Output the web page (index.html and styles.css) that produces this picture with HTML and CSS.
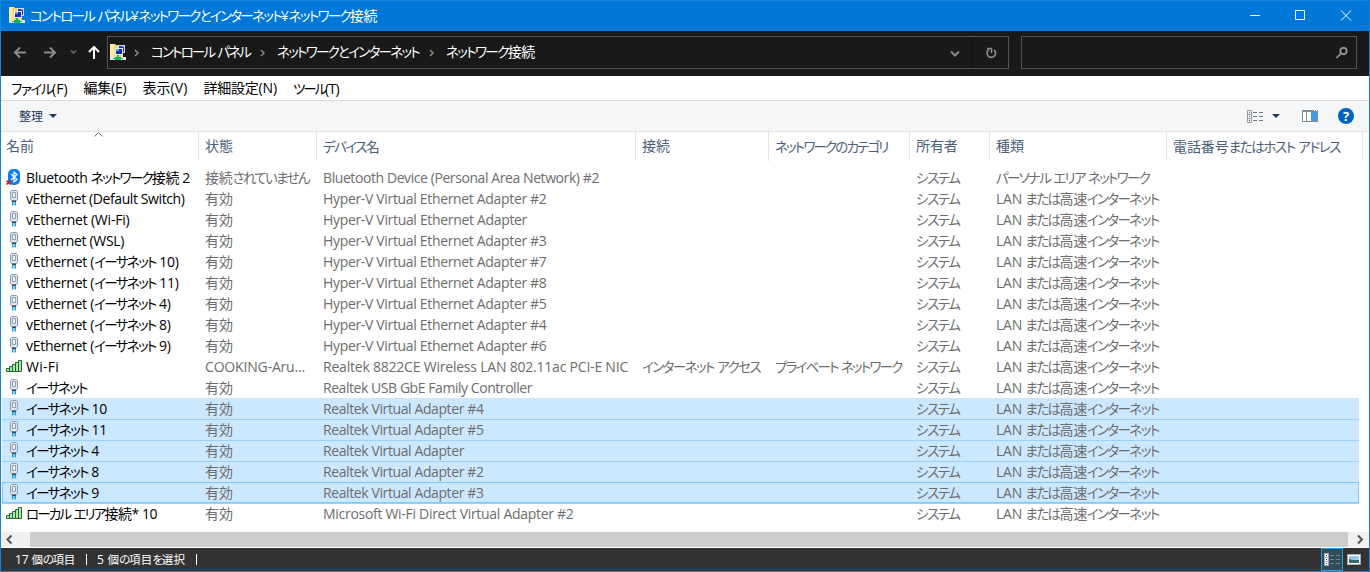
FILE: index.html
```html
<!doctype html>
<html lang="ja">
	<head>
		<meta charset="utf-8">
		<title>ネットワーク接続</title>
		<link rel="stylesheet" href="styles.css">
	</head>
	<body>
		<!-- shared icons -->
		<svg class="defs" width="0" height="0">
			<symbol id="i-net" viewBox="0 0 16 16">
				<path d="M0 0h5l1 1h7v12H0z" fill="#f0d878"/>
				<path d="M0 0h4v13H0z" fill="#fdeba0"/>
				<path d="M8 1h7v8H8z" fill="#d8dce0"/>
				<path d="M9 2h5v6H9z" fill="#1638c8"/>
				<path d="M5 4h8v7H5z" fill="#e6eaee"/>
				<path d="M6 5h6v5H6z" fill="#1230b4"/>
				<path d="M6 5h3v2H6zM12 2h2v1h-2z" fill="#6f9cf5"/>
				<path d="M0 13h16v3H0z" fill="#e4e8ea"/>
				<path d="M7 11h2v2h2v3H5v-3h2z" fill="#12b860"/>
				<path d="M3 14h10v1H3z" fill="#12b860"/>
			</symbol>
			<symbol id="i-lan" viewBox="0 0 16 16">
				<path d="M5.500 .5h5l1 1v8l-1.500 1.500H6l-1.500-1.500v-8z" fill="#dfe5ec" stroke="#8c9bb0"/>
				<path d="M6.500 2.500v5h3v-5z" fill="#f6f8fa" stroke="#8c9bb0"/>
				<path d="M6 10.500h4v1.500H6z" fill="#33475e"/>
				<path d="M6 12h1.500v3H6zM8.500 12H10v3H8.500z" fill="#1ba0cf"/>
				<path d="M6 15h1.500v1H6zM8.500 15H10v1H8.500z" fill="#8cd3ea"/>
			</symbol>
			<symbol id="i-bt" viewBox="0 0 16 16">
				<rect x="2" y="0" width="12" height="16" rx="5" fill="#0a7cf2"/>
				<path d="M5 5l6 5.500L8 13V3l3 2.500L5 11" fill="none" stroke="#fff" stroke-width="1.2"/>
				<path d="M.5 11.500l4 4M4.500 11.500l-4 4" stroke="#c4161c" stroke-width="1.500"/>
			</symbol>
			<symbol id="i-wifi" viewBox="0 0 16 16">
				<path d="M.5 10.500h3v3h-3zM3.500 8.500h3v5h-3zM6.500 6.500h3v7h-3zM9.500 4.500h3v9h-3zM12.500 2.500h3v11h-3z" fill="#a9e8b4" stroke="#25682f"/>
			</symbol>
		</svg>

		<div id="window">
			<div id="title-bar">
				<svg class="icon"><use href="#i-net"/></svg>
				<span class="title" data-w="347">コントロール パネル¥ネットワークとインターネット¥ネットワーク接続</span>
				<svg class="buttons" width="138" height="30" fill="none" stroke="#fff">
					<path d="M19 14.500h10M64.500 9.500h9v9h-9zM110 9.500l10 10M120 9.500l-10 10"/>
				</svg>
			</div>

			<div id="nav-bar">
				<svg class="arrows" width="105" height="45" fill="none" stroke="#8a8a8a" stroke-width="2">
					<path d="M25 21.500H14M19 16.500l-5 5 5 5M43 21.500h11M49 16.500l5 5-5 5"/>
					<path d="M70 19.500l2.500 2.500 2.500-2.500" stroke="#666" stroke-width="1.700"/>
					<path d="M93 28V16M88 21l5-5 5 5" stroke="#fff"/>
				</svg>
				<div class="address">
					<svg class="icon"><use href="#i-net"/></svg>
					<svg class="sep" width="6" height="8"><path d="M1 1l3 3-3 3"/></svg>
					<span class="crumb" data-w="99">コントロール パネル</span>
					<svg class="sep" width="6" height="8"><path d="M1 1l3 3-3 3"/></svg>
					<span class="crumb" data-w="142">ネットワークとインターネット</span>
					<svg class="sep" width="6" height="8"><path d="M1 1l3 3-3 3"/></svg>
					<span class="crumb" data-w="89">ネットワーク接続</span>
					<svg class="tools" width="67" height="31" fill="none" stroke="#8a8a8a" stroke-width="2">
						<path d="M10 14.500l4 4 4-4"/>
						<path d="M31.500 0v31" stroke="#111" stroke-width="1"/>
						<path d="M53 12.800a4.300 4.300 0 1 1-5-.3" stroke-width="1.700"/>
						<path d="M46 11.500h4.500v4.500" stroke-width="1.500"/>
					</svg>
				</div>
				<div class="search">
					<svg width="14" height="14" fill="none" stroke="#999" stroke-width="1.700"><circle cx="8.500" cy="5" r="3.200"/><path d="M6 7.500l-4.500 4.500"/></svg>
				</div>
			</div>

			<div id="menu">
				<span data-w="56.5">ファイル(F)</span>
				<span data-w="43">編集(E)</span>
				<span data-w="45">表示(V)</span>
				<span data-w="73.5">詳細設定(N)</span>
				<span data-w="46">ツール(T)</span>
			</div>

			<div id="tool-bar">
				<span class="organize">整理</span>
				<svg class="caret" width="8" height="4"><path d="M0 0h8L4 4z"/></svg>
				<svg class="view" width="17" height="13" fill="none">
					<path d="M.5 .5h4v12h-4zM.5 4.500h4M.5 8.500h4" stroke="#9a9a9a"/>
					<path d="M6 2.500h4M12 2.500h4M6 6.500h4M12 6.500h4M6 10.500h4M12 10.500h4" stroke="#777"/>
					<path d="M2 2h1v1H2z" fill="#3a6ea5"/><path d="M2 6h1v1H2z" fill="#3a6ea5"/><path d="M2 10h1v1H2z" fill="#b03030"/>
				</svg>
				<svg class="caret" width="8" height="4"><path d="M0 0h8L4 4z"/></svg>
				<svg class="pane" width="16" height="12">
					<path d="M0 0h16v12H0z" fill="#858c94"/><path d="M1 2h3v9H1zM5 2h4v9H5z" fill="#fff"/><path d="M9 2h6v9H9z" fill="#3f9be8"/><path d="M12 .5h1M14 .5h1" stroke="#fff"/>
				</svg>
				<span class="help">?</span>
			</div>

			<div id="list">
				<div class="row head">
					<span>名前<svg class="sort" width="9" height="5"><path d="M.5 4.500l4-4 4 4" fill="none" stroke="#666"/></svg></span>
					<span>状態</span>
					<span data-w="56.5">デバイス名</span>
					<span>接続</span>
					<span data-w="112.5">ネットワークのカテゴリ</span>
					<span>所有者</span>
					<span>種類</span>
					<span data-w="167">電話番号またはホスト アドレス</span>
				</div>
				<div id="rows"></div>
			</div>

			<div id="scroll-bar">
				<svg width="29" height="15"><path d="M10.500 3.500l-4 4 4 4"/></svg>
				<div class="thumb"></div>
				<svg width="21" height="15"><path d="M10 3.500l4 4-4 4"/></svg>
			</div>

			<div id="status-bar">
				<span data-w="60">17 個の項目</span>
				<i></i>
				<span data-w="88">5 個の項目を選択</span>
				<i></i>
				<div class="mode active">
					<svg width="17" height="13" fill="none">
						<path d="M.5 .5h4v12h-4z" fill="#fff" stroke="#aaa"/><path d="M0 4.500h5M0 8.500h5" stroke="#aaa"/>
						<path d="M6 2.500h4M12 2.500h4M6 6.500h4M12 6.500h4M6 10.500h4M12 10.500h4" stroke="#75838b"/>
						<path d="M2 2h1v1H2zM2 6h1v1H2zM2 10h1v1H2z" fill="#333"/>
					</svg>
				</div>
				<div class="mode">
					<svg width="14" height="11"><path d="M0 0h14v11H0z" fill="#aaa"/><path d="M1 1h12v9H1z" fill="#fff"/><path d="M2 2h10v7H2z" fill="#9cc9ef"/><path d="M2 5l4 1h6v3H2z" fill="#35656f"/></svg>
				</div>
			</div>
		</div>

		<script src="main.js"></script>
	</body>
</html>
```
FILE: styles.css
```css
html,
body,
div {
	margin: 0;
	padding: 0;
}
body {
	overflow: hidden;
	font: 14px/21px "Open Sans", "Noto Sans CJK JP", sans-serif;
	color: #000;
}
.defs {
	position: absolute;
}
/* --fit is set by main.js */
[data-w] {
	letter-spacing: var(--fit, 0px);
}
.kana {
	font-family: "Noto Sans CJK JP", sans-serif;
	font-feature-settings: "palt";
	font-size: 13.5px;
	letter-spacing: calc(-1.4px + var(--fit, 0px));
}
.kanji {
	letter-spacing: calc(-.1px + var(--fit, 0px));
}
.icon {
	width: 16px;
	height: 16px;
	flex: none;
}
#window {
	display: flex;
	flex-direction: column;
	box-sizing: border-box;
	width: 1370px;
	height: 572px;
	border: 1px solid #1883d7;
	background: #fff;
	white-space: nowrap;
}

/* title */
#title-bar {
	display: flex;
	align-items: center;
	height: 30px;
	padding-left: 8px;
	color: #fff;
	background: #0078d7;
}
#title-bar .title {
	margin: -2px 0 0 5px;
}
#title-bar .icon {
	margin-top: -2px;
}
#title-bar .buttons {
	margin-left: auto;
}

/* address */
#nav-bar {
	display: flex;
	align-items: flex-start;
	height: 45px;
	background: #191919;
	color: #fff;
}
#nav-bar .address,
#nav-bar .search {
	display: flex;
	align-items: center;
	box-sizing: border-box;
	height: 33px;
	margin-top: 5px;
	border: 1px solid #535353;
}
#nav-bar .address {
	width: 902px;
	margin-left: 1px;
	padding-left: 2px;
}
#nav-bar .icon {
	margin-top: -1px;
}
#nav-bar .crumb {
	margin-top: -2px;
}
#nav-bar .sep {
	margin: 0 11px 0 8px;
	fill: none;
	stroke: #888;
	stroke-width: 1.5;
}
#nav-bar .crumb + .sep {
	margin-left: 10px;
}
#nav-bar .tools {
	margin-left: auto;
}
#nav-bar .search {
	width: 336px;
	margin-left: 12px;
	justify-content: flex-end;
	padding-right: 7px;
}

/* menu */
#menu {
	display: flex;
	gap: 16px;
	height: 24px;
	line-height: 24px;
	padding-left: 10px;
	border-bottom: 1px solid #dadada;
}
#tool-bar {
	display: flex;
	align-items: center;
	height: 30px;
	padding: 0 15px 0 18px;
	border-bottom: 1px solid #e5e5e5;
	background: #f4f6f8;
	color: #1e395b;
}
#tool-bar .organize .kanji {
	font-size: 12px;
}
#tool-bar .caret {
	fill: #1e395b;
	margin-left: 6px;
}
#tool-bar .view {
	margin-left: auto;
}
#tool-bar .view + .caret {
	margin-left: 8px;
}
#tool-bar .pane {
	margin: 0 20px 0 22px;
}
#tool-bar .help {
	width: 16px;
	height: 16px;
	border-radius: 50%;
	background: #0063c0;
	color: #fff;
	font-weight: bold;
	font-size: 13px;
	line-height: 16px;
	text-align: center;
}

/* list */
#list {
	flex: 1;
	color: #6d6d6d;
}
.row {
	display: grid;
	grid-template-columns: 198px 118px 319px 133px 141px 80px 177px 196px;
	height: 21px;
}
.row > span {
	padding-left: 6px;
}
.head {
	height: 29px;
	margin-bottom: 6px;
	line-height: 28px;
	color: #4c607a;
}
.head > span {
	border-right: 1px solid #e5e5e5;
}
.head > span:first-child {
	position: relative;
	padding-left: 5px;
}
.head .sort {
	position: absolute;
	left: 93px;
	top: 0;
}
#rows .row {
	box-sizing: border-box;
	width: 1357px;
	margin-left: 1px;
	grid-template-columns: 197px 118px 319px 133px 141px 80px 177px;
}
#rows .row > span:first-child {
	display: flex;
	padding-left: 4px;
	color: #000;
}
#rows .row > span:first-child > span {
	white-space: pre;
}
#rows .row .icon {
	margin: 2px 4px 0 0;
}
.row.on {
	background: #cce8ff;
}
.row.on + .row.on {
	box-shadow: inset 0 1px #99d1ff;
}
#rows .row.focus {
	box-shadow: inset 0 0 0 1px #85c6fb, 0 1px #99d1ff;
}

/* bottom */
#scroll-bar {
	display: flex;
	height: 15px;
	margin-bottom: 1px;
	background: #f0f0f0;
}
#scroll-bar .thumb {
	flex: 1;
	background: #cdcdcd;
}
#scroll-bar svg {
	fill: none;
	stroke: #505050;
	stroke-width: 2;
}
#status-bar {
	display: flex;
	align-items: center;
	height: 23px;
	padding: 0 4px 0 14px;
	background: #333;
	color: #fff;
	font-size: 12px;
}
#status-bar .kanji,
#status-bar .kana {
	font-size: 11.5px;
}
#status-bar i {
	width: 1px;
	height: 11px;
	margin: 0 10px 0 11px;
	background: #fff;
}
#status-bar .mode {
	display: flex;
	align-items: center;
	justify-content: center;
	box-sizing: border-box;
	width: 22px;
	height: 23px;
}
#status-bar .active {
	margin-left: auto;
	border: 1px solid #26a0da;
	background: #2f4c5a;
}
```
FILE: main.js
```js
var LAN = "LAN または高速インターネット";
//アイコン, 名前, 状態, デバイス名, 接続, カテゴリ, 種類, class
var aRows = [
	["bt", "Bluetooth ネットワーク接続 2|164", "接続されていません|104", "Bluetooth Device (Personal Area Network) #2|276", "", "", "パーソナル エリア ネットワーク|153"],
	["lan", "vEthernet (Default Switch)|158.5", "有効", "Hyper-V Virtual Ethernet Adapter #2|223.5", "", "", LAN],
	["lan", "vEthernet (Wi-Fi)|103.5", "有効", "Hyper-V Virtual Ethernet Adapter|204", "", "", LAN],
	["lan", "vEthernet (WSL)|98", "有効", "Hyper-V Virtual Ethernet Adapter #3|223.5", "", "", LAN],
	["lan", "vEthernet (イーサネット 10)|152.5", "有効", "Hyper-V Virtual Ethernet Adapter #7|223.5", "", "", LAN],
	["lan", "vEthernet (イーサネット 11)|152.5", "有効", "Hyper-V Virtual Ethernet Adapter #8|223.5", "", "", LAN],
	["lan", "vEthernet (イーサネット 4)|144.5", "有効", "Hyper-V Virtual Ethernet Adapter #5|223.5", "", "", LAN],
	["lan", "vEthernet (イーサネット 8)|144.5", "有効", "Hyper-V Virtual Ethernet Adapter #4|223.5", "", "", LAN],
	["lan", "vEthernet (イーサネット 9)|144.5", "有効", "Hyper-V Virtual Ethernet Adapter #6|223.5", "", "", LAN],
	["wifi", "Wi-Fi|33", "COOKING-Aru...|100", "Realtek 8822CE Wireless LAN 802.11ac PCI-E NIC|305", "インターネット アクセス|118", "プライベート ネットワーク|126.5", LAN],
	["lan", "イーサネット|60.5", "有効", "Realtek USB GbE Family Controller|209", "", "", LAN],
	["lan", "イーサネット 10|81", "有効", "Realtek Virtual Adapter #4|160.5", "", "", LAN, "on"],
	["lan", "イーサネット 11|81", "有効", "Realtek Virtual Adapter #5|160.5", "", "", LAN, "on"],
	["lan", "イーサネット 4|73", "有効", "Realtek Virtual Adapter|141", "", "", LAN, "on"],
	["lan", "イーサネット 8|73", "有効", "Realtek Virtual Adapter #2|160.5", "", "", LAN, "on"],
	["lan", "イーサネット 9|73", "有効", "Realtek Virtual Adapter #3|160.5", "", "", LAN, "on focus"],
	["wifi", "ローカル エリア接続* 10|131", "有効", "Microsoft Wi-Fi Direct Virtual Adapter #2|250.5", "", "", LAN]
];

function cell(s){
	var a = s.split("|");
	return "<span" + (a[1] ? ' data-w="' + a[1] + '"' : "") + ">" + a[0] + "</span>";
}

//一覧の行
document.getElementById("rows").innerHTML = aRows.map(function(r){
	return '<div class="row ' + (r[7] || "") + '"><span><svg class="icon"><use href="#i-' + r[0] + '"/></svg>' + cell(r[1]) + "</span>" +
		cell(r[2]) + cell(r[3]) + cell(r[4]) + cell(r[5]) + cell("システム|43.5") + cell(r[6] == LAN ? LAN + "|162.5" : r[6]) + "</div>";
}).join("");

//かなと漢字は字幅が違うので分ける
document.querySelectorAll("#window span").forEach(function(el){
	Array.from(el.childNodes).forEach(function(node){
		if(node.nodeType != 3)
			return ;
		var oTmp = document.createElement("span");
		oTmp.innerHTML = node.nodeValue
			.replace(/[\u3040-\u30ff]+/g, '<span class="kana">$&</span>')
			.replace(/[\u4e00-\u9fff]+/g, '<span class="kanji">$&</span>');
		node.replaceWith.apply(node, Array.from(oTmp.childNodes));
	});
});

//文字間隔の調整
document.querySelectorAll("[data-w]").forEach(function(el){
	var oRange = document.createRange();
	oRange.selectNodeContents(el);
	var vDiff = el.getAttribute("data-w") - oRange.getBoundingClientRect().width;
	el.style.setProperty("--fit", vDiff / el.textContent.length + "px");
});
```
